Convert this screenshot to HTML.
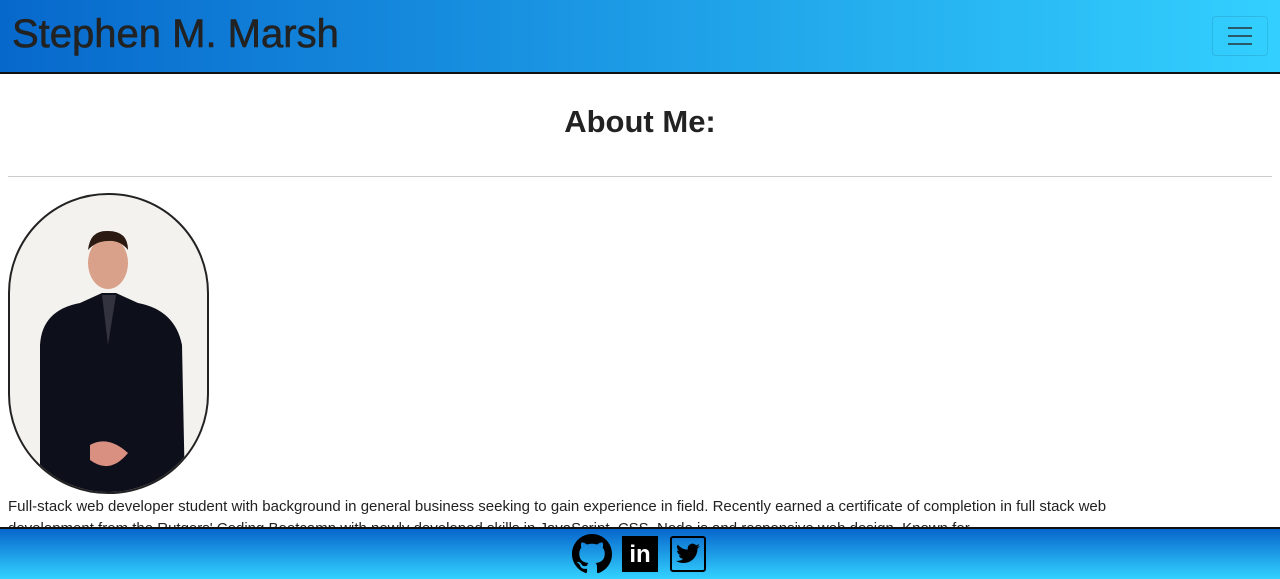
<!DOCTYPE html>
<html><head><style>
body{margin:0;font-family:"Liberation Sans",sans-serif;background:#fff;width:1280px;height:577px;overflow:hidden;position:relative;color:#212529}
.nav{position:absolute;left:0;top:0;width:1280px;height:72px;background:linear-gradient(90deg,#0768cc,#33d0ff);border-bottom:2px solid #111}
.nav h1{margin:0;position:absolute;left:12px;top:12px;font-size:40px;font-weight:normal;color:#222;-webkit-text-stroke:0.6px #222}
.tog{position:absolute;left:1212px;top:16px;width:54px;height:38px;border:1px solid rgba(0,0,0,.1);border-radius:4px}
.tog i{position:absolute;left:15px;width:24px;height:2px;background:#2a5a6a}
h2{position:absolute;top:104px;left:0;width:1280px;text-align:center;margin:0;font-size:31px;font-weight:600;color:#222}
hr{position:absolute;top:176px;left:8px;width:1264px;margin:0;border:0;border-top:1px solid #ccc}
.ph{position:absolute;left:8px;top:193px;width:197px;height:297px;border:2px solid #222;border-radius:100px;background:#f4f2ee;overflow:hidden}
p{position:absolute;left:8px;top:496px;margin:0;width:1160px;font-size:15px;line-height:22px;color:#222}
.ft{position:absolute;left:0;top:527px;width:1280px;height:50px;background:linear-gradient(180deg,#0766cc,#33d2ff);border-top:2px solid #111}
</style></head><body>
<div class="nav"><h1>Stephen M. Marsh</h1><div class="tog"><i style="top:10px"></i><i style="top:18px"></i><i style="top:26px"></i></div></div>
<h2>About Me:</h2>
<hr>
<div class="ph"><svg width="197" height="297" viewBox="0 0 197 297">
<ellipse cx="98" cy="68" rx="20" ry="26" fill="#d9a08a"/>
<path d="M78 55 Q80 35 98 36 Q118 36 118 55 Q110 45 98 46 Q86 46 78 55Z" fill="#2a1a12"/>
<path d="M30 297 L30 150 Q32 115 70 108 L92 98 L106 98 L128 108 Q165 115 172 150 L175 297Z" fill="#0d0f1a"/>
<path d="M92 100 L98 150 L106 100Z" fill="#333340"/>
<path d="M80 250 Q98 240 118 258 Q100 280 80 265Z" fill="#d99080"/>
</svg></div>
<p>Full-stack web developer student with background in general business seeking to gain experience in field. Recently earned a certificate of completion in full stack web development from the Rutgers' Coding Bootcamp with newly developed skills in JavaScript, CSS, Node.js and responsive web design. Known for ...</p>
<div class="ft">
<svg style="position:absolute;left:572px;top:5px" width="40" height="40" viewBox="0 0 16 16"><path fill="#000" d="M8 0C3.58 0 0 3.58 0 8c0 3.54 2.290 6.53 5.47 7.59.4.07.55-.17.55-.38v-1.33c-2.23.48-2.7-1.07-2.7-1.07-.36-.92-.89-1.170-.89-1.17-.73-.5.06-.49.06-.49.8.06 1.23.83 1.23.83.71 1.23 1.87.87 2.33.67.07-.52.28-.87.5-1.07-1.78-.2-3.64-.89-3.640-3.95 0-.87.31-1.59.82-2.15-.08-.2-.36-1.02.08-2.12 0 0 .67-.21 2.2.82a7.6 7.6 0 0 1 4 0c1.53-1.04 2.2-.82 2.2-.82.44 1.1.16 1.92.08 2.12.51.56.82 1.27.82 2.15 0 3.07-1.87 3.75-3.65 3.95.29.25.54.73.54 1.48v2.2c0 .21.15.46.55.38A8 8 0 0 0 16 8c0-4.42-3.58-8-8-8z"/></svg>
<div style="position:absolute;left:622px;top:7px;width:36px;height:36px;background:#000;color:#fff;font-weight:bold;font-size:24px;line-height:38px;text-align:center">in</div>
<div style="position:absolute;left:670px;top:7px;width:32px;height:32px;border:2px solid #000;border-radius:3px;text-align:center"><svg width="26" height="26" viewBox="0 0 24 24" style="margin-top:3px"><path fill="#000" d="M23 4.6a9 9 0 0 1-2.6.7 4.5 4.5 0 0 0 2-2.5 9 9 0 0 1-2.900 1.1A4.5 4.5 0 0 0 11.8 8 12.8 12.8 0 0 1 2.5 3.3a4.5 4.5 0 0 0 1.4 6 4.4 4.4 0 0 1-2-.6 4.5 4.5 0 0 0 3.6 4.5 4.5 4.5 0 0 1-2 .1 4.5 4.5 0 0 0 4.2 3.1A9 9 0 0 1 1 18.3 12.8 12.8 0 0 0 7.9 20.3c8.3 0 12.8-6.9 12.8-12.8v-.6A9 9 0 0 0 23 4.6z"/></svg></div>
</div>
</body></html>
